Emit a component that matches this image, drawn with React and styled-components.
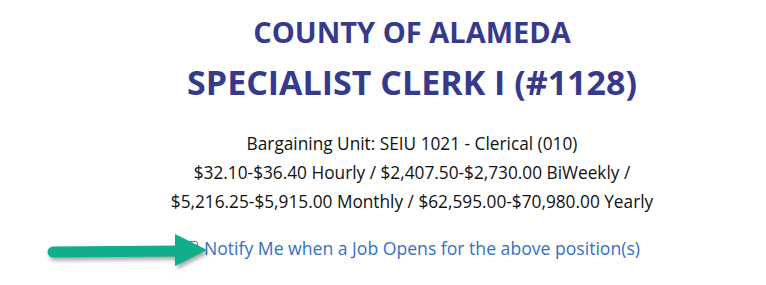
import React from "react";
import styled, { createGlobalStyle } from "styled-components";

const Global = createGlobalStyle`
  body {
    margin: 0;
    background: #fff;
    font-family: "Open Sans", "Noto Sans", sans-serif;
  }
`;

const Page = styled.div`
  width: 766px;
  height: 285px;
  box-sizing: border-box;
  padding: 12px 0 0 58px;
  display: flex;
  flex-direction: column;
  align-items: center;
  text-align: center;
  position: relative;
  overflow: hidden;
`;

const Agency = styled.h2`
  margin: 0;
  font-size: 29px;
  font-weight: 700;
  line-height: 40px;
  color: #363a8c;
`;

const JobTitle = styled.h1`
  margin: 7px 0 0;
  font-size: 34px;
  font-weight: 700;
  line-height: 46px;
  color: #363a8c;
`;

const Details = styled.div`
  margin-top: 24px;
  font-size: 17.25px;
  line-height: 29px;
  color: #111;
`;

const NotifyRow = styled.label`
  margin-top: 20px;
  display: flex;
  align-items: center;
  gap: 6px;
  font-size: 17.6px;
  color: #3470c4;
  cursor: pointer;
`;

const Box = styled.input`
  width: 14px;
  height: 14px;
  margin: 0;
`;

const Arrow = styled.svg`
  position: absolute;
  left: 44px;
  top: 230px;
  filter: drop-shadow(2px 3px 2px rgba(0, 0, 0, 0.35));
`;

export default function App() {
  return (
    <>
      <Global />
      <Page>
        <Agency>COUNTY OF ALAMEDA</Agency>
        <JobTitle>SPECIALIST CLERK I (#1128)</JobTitle>
        <Details>
          <div>Bargaining Unit: SEIU 1021 - Clerical (010)</div>
          <div>$32.10-$36.40 Hourly / $2,407.50-$2,730.00 BiWeekly /</div>
          <div>$5,216.25-$5,915.00 Monthly / $62,595.00-$70,980.00 Yearly</div>
        </Details>
        <NotifyRow>
          <Box type="checkbox" />
          Notify Me when a Job Opens for the above position(s)
        </NotifyRow>
        <Arrow width="170" height="40" viewBox="0 0 170 40">
          <line x1="9" y1="22" x2="140" y2="21" stroke="#12ad8a" strokeWidth="11" strokeLinecap="round" />
          <polygon points="131,4 163,20 131,36" fill="#12ad8a" />
        </Arrow>
      </Page>
    </>
  );
}
